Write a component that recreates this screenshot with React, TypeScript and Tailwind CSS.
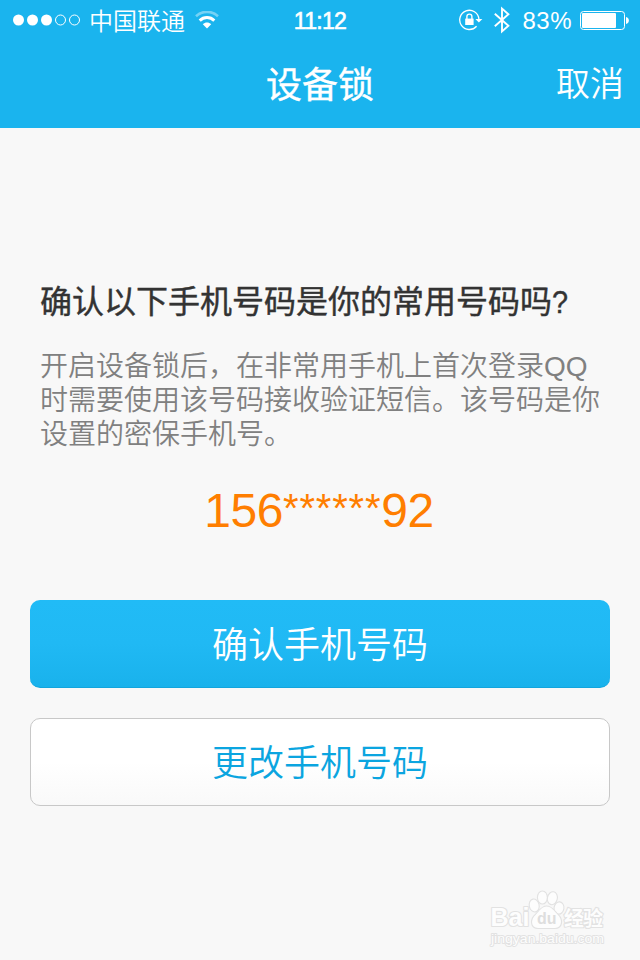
import React from 'react';

const SignalDots: React.FC = () => (
  <svg width="68" height="12" viewBox="0 0 68 12">
    {[0, 1, 2, 3, 4].map(i => (
      <circle
        key={i}
        cx={5.5 + i * 14}
        cy="6"
        r={i < 3 ? 5.5 : 5}
        fill={i < 3 ? '#fff' : 'none'}
        stroke={i < 3 ? 'none' : '#fff'}
        strokeWidth="1"
      />
    ))}
  </svg>
);

const WifiIcon: React.FC = () => (
  <svg width="24" height="18" viewBox="0 0 24 18" fill="none" stroke="#fff">
    <path d="M1 5.2C7.2 -.6 16.8 -.6 23 5.2" strokeWidth="2.6" opacity="0.4" />
    <path d="M4.7 9.6C8.8 5.6 15.2 5.6 19.3 9.6" strokeWidth="3" />
    <path d="M7.8 13.2C10.2 10.8 13.8 10.8 16.2 13.2L12 17.6Z" fill="#fff" stroke="none" />
  </svg>
);

const RotationLockIcon: React.FC = () => (
  <svg width="24" height="22" viewBox="0 0 24 22" fill="none" stroke="#fff">
    <path d="M17.6 17.2A9.6 9.6 0 1 1 19.9 10" strokeWidth="1.3" />
    <path d="M16.4 10H23.4L19.9 13.4Z" fill="#fff" stroke="none" />
    <rect x="6.2" y="9.6" width="8.4" height="6.4" fill="#fff" stroke="none" />
    <path d="M7.9 10V7.6a2.5 2.5 0 0 1 5 0V10" strokeWidth="1.4" />
  </svg>
);

const BluetoothIcon: React.FC = () => (
  <svg width="16" height="28" viewBox="0 0 16 28" fill="none" stroke="#fff" strokeWidth="1.9">
    <path d="M.8 7.8L14.4 19.8L8 25.4V2.6L14.4 8.2L.8 20.2" />
  </svg>
);

const BatteryIcon: React.FC = () => (
  <svg width="49" height="19" viewBox="0 0 49 19">
    <rect x="0.5" y="0.5" width="44" height="18" rx="3" fill="none" stroke="#fff" />
    <rect x="2" y="2" width="34" height="15" rx="1" fill="#fff" />
    <path d="M46 6C49.8 6.4 49.8 12.6 46 13Z" fill="#fff" />
  </svg>
);

const Watermark: React.FC = () => (
  <svg
    className="absolute left-[488px] top-[888px]"
    width="124"
    height="60"
    viewBox="0 0 124 60"
    fill="#fdfdfd"
    stroke="#e2e2e2"
    strokeWidth="2.2"
    strokeLinejoin="round"
    style={{ paintOrder: 'stroke' }}
  >
    <ellipse cx="46.2" cy="17.5" rx="4.4" ry="6" transform="rotate(-12 46.2 17.5)" />
    <ellipse cx="54.4" cy="9.5" rx="4.4" ry="6" />
    <ellipse cx="64.4" cy="10.2" rx="4.4" ry="6" transform="rotate(12 64.4 10.2)" />
    <ellipse cx="71" cy="20" rx="4.4" ry="5.6" transform="rotate(8 71 20)" />
    <path d="M58.5 18.6C54 18.6 51.5 23 48 26.5C42 31.5 43 39.8 50 40H67C74 39.8 75 31.5 69.5 26.5C66 23 63.5 18.6 58.5 18.6Z" />
    <g fontFamily="'Liberation Sans', sans-serif" fontWeight="bold">
      <text x="2.5" y="38" fontSize="26" textLength="39" lengthAdjust="spacingAndGlyphs">Bai</text>
      <text x="49" y="36" fontSize="17" textLength="19.5" lengthAdjust="spacingAndGlyphs" fill="#dedede" stroke="none">du</text>
    </g>
    <text x="76" y="37.5" fontSize="20" textLength="39" fontWeight="bold" fontFamily="'Noto Sans CJK SC', sans-serif">经验</text>
    <text
      x="3" y="54.5" fontSize="13" textLength="113" strokeWidth="1.8" lengthAdjust="spacingAndGlyphs"
      fontFamily="'Liberation Sans', sans-serif"
    >
      jingyan.baidu.com
    </text>
  </svg>
);

const StatusBar: React.FC = () => (
  <div className="grid h-10 grid-cols-[1fr_auto_1fr] items-center pr-[11px] pl-[13px] text-2xl leading-9">
    <div className="flex items-center">
      <SignalDots />
      <span className="mr-[10px] ml-2 pt-1 font-[350]">中国联通</span>
      <WifiIcon />
    </div>
    <span className="pt-0.5 pr-0.5 text-[23px] tracking-[-0.7px] [-webkit-text-stroke:0.6px_white]">11:12</span>
    <div className="flex items-center justify-end">
      <RotationLockIcon />
      <span className="ml-[11px]">
        <BluetoothIcon />
      </span>
      <span className="mr-2 ml-3 pt-0.5 tracking-[0.5px]">83%</span>
      <BatteryIcon />
    </div>
  </div>
);

export default function App() {
  return (
    <div className="relative h-[960px] w-[640px] overflow-hidden bg-[#f8f8f8] font-['Liberation_Sans','Noto_Sans_CJK_SC',sans-serif]">
      <header className="h-32 bg-[#1ab4ee] text-white">
        <StatusBar />
        <div className="grid h-[88px] grid-cols-[1fr_auto_1fr] items-center px-4">
          <span />
          <h1 className="pt-1 text-4xl [-webkit-text-stroke:0.4px_white]">设备锁</h1>
          <button className="justify-self-end text-[34px] font-[350]">取消</button>
        </div>
      </header>

      <main className="px-[30px] pt-[158px]">
        <div className="px-2.5">
          <h2 className="text-[32px] leading-8 whitespace-nowrap text-[#333] [-webkit-text-stroke:0.4px_#333]">
            确认以下手机号码是你的常用号码吗<span className="inline-block origin-left scale-x-90">?</span>
          </h2>
          <p className="mt-8 text-[28px] leading-[34px] font-[350] whitespace-nowrap text-[#808080]">
            开启设备锁后，在非常用手机上首次登录QQ
            <br />
            时需要使用该号码接收验证短信。该号码是你
            <br />
            设置的密保手机号。
          </p>
        </div>

        <p className="mt-[35px] pr-0.5 text-center text-[48px] leading-[48px] tracking-[-0.4px] text-[#ff7e00]">
          156<span className="align-[5px] text-[40px] leading-none tracking-[0.8px]">******</span>92
        </p>

        {/* Actions */}
        <div className="mt-[65px] flex flex-col gap-[30px] text-4xl font-[350]">
          <button className="h-[88px] rounded-[10px] border-b border-[#12a5dd] bg-linear-to-b from-[#21bbf6] via-[#20b9f4] to-[#19b2ec] pt-1 text-white">
            确认手机号码
          </button>
          <button className="h-[88px] rounded-[10px] border border-[#c8c8c8] bg-linear-to-b from-white via-white to-[#f9f9f9] pt-1 text-[#0ba5e0]">
            更改手机号码
          </button>
        </div>
      </main>

      <Watermark />
    </div>
  );
}
